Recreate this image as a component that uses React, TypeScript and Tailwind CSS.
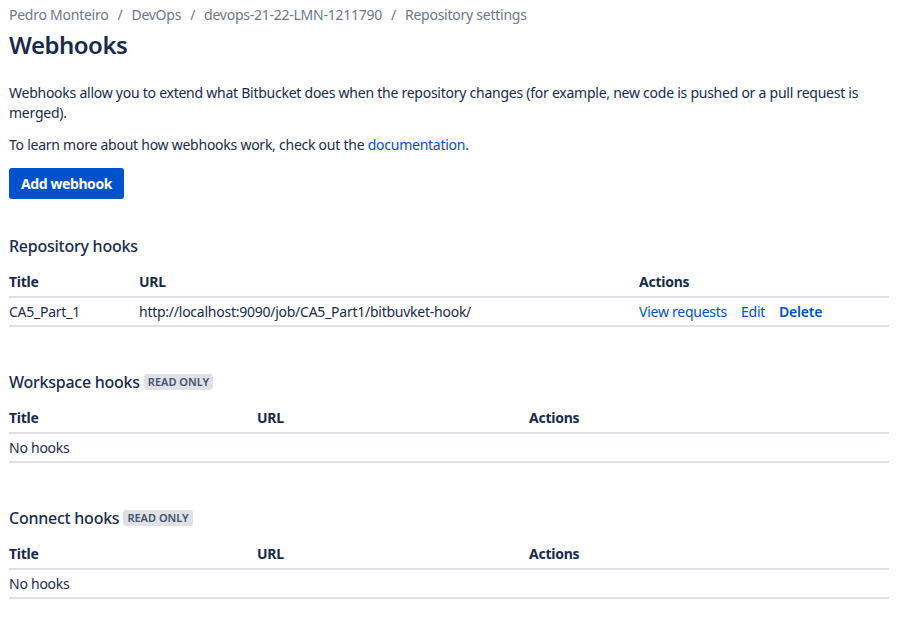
const FONT = "[font-family:'Segoe_UI','Noto_Sans',sans-serif]";

type Col = { label: string; w: string };

function HooksTable({
  cols,
  children,
}: {
  cols: Col[];
  children: React.ReactNode;
}) {
  return (
    <table className="w-[880px] border-collapse text-left text-sm text-[#172b4d]">
      <thead>
        <tr className="border-b-2 border-[#dfe1e6]">
          {cols.map((c) => (
            <th key={c.label} className={`${c.w} h-[30px] p-0 pt-px align-middle font-bold`}>
              {c.label}
            </th>
          ))}
        </tr>
      </thead>
      <tbody>{children}</tbody>
    </table>
  );
}

function ReadOnly() {
  return (
    <span className="ml-1 rounded-[3px] bg-[#dfe1e6] px-1 py-px text-[11px] font-semibold uppercase leading-[14px] tracking-normal text-[#42526e]">
      Read only
    </span>
  );
}

export default function App() {
  return (
    <div
      className={`${FONT} min-h-screen bg-white px-[9px] pt-[5px] text-sm tracking-[-0.25px] text-[#172b4d]`}
    >
      {/* Breadcrumbs */}
      <nav className="flex h-5 items-center gap-[9px] text-[#6b778c]">
        <span>Pedro Monteiro</span>
        <span>/</span>
        <span>DevOps</span>
        <span>/</span>
        <span>devops-21-22-LMN-1211790</span>
        <span>/</span>
        <span>Repository settings</span>
      </nav>
      <h1 className="mt-[5px] text-2xl font-semibold leading-[30px] tracking-[-0.5px]">Webhooks</h1>

      <p className="mt-[23px] w-[860px] leading-5">
        Webhooks allow you to extend what Bitbucket does when the repository changes (for
        example, new code is pushed or a pull request is merged).
      </p>
      <p className="mt-3 leading-5">
        To learn more about how webhooks work, check out the{" "}
        <a className="text-[#0052cc]" href="#">
          documentation
        </a>
        .
      </p>
      <button className="mt-[13px] h-[31px] rounded-[3px] bg-[#0052cc] px-3 font-bold tracking-[-0.4px] text-white">
        Add webhook
      </button>

      {/* Repository hooks */}
      <h2 className="mt-[37px] text-base font-medium leading-5">Repository hooks</h2>
      <div className="mt-[11px]">
        <HooksTable
          cols={[
            { label: "Title", w: "w-[130px]" },
            { label: "URL", w: "w-[500px]" },
            { label: "Actions", w: "" },
          ]}
        >
          <tr className="border-b-2 border-[#dfe1e6]">
            <td className="h-[29px] p-0 align-middle">CA5_Part_1</td>
            <td className="p-0 align-middle">http://localhost:9090/job/CA5_Part1/bitbuvket-hook/</td>
            <td className="p-0 align-middle">
              <span className="flex gap-[14px] text-[#0052cc]">
                <a href="#">View requests</a>
                <a href="#">Edit</a>
                <a href="#" className="font-semibold">
                  Delete
                </a>
              </span>
            </td>
          </tr>
        </HooksTable>
      </div>

      {/* Workspace hooks */}
      <h2 className="mt-[45px] flex items-center text-base font-medium leading-5">
        Workspace hooks <ReadOnly />
      </h2>
      <div className="mt-[11px]">
        <HooksTable
          cols={[
            { label: "Title", w: "w-[248px]" },
            { label: "URL", w: "w-[272px]" },
            { label: "Actions", w: "" },
          ]}
        >
          <tr className="border-b-2 border-[#dfe1e6]">
            <td colSpan={3} className="h-[29px] p-0 align-middle">
              No hooks
            </td>
          </tr>
        </HooksTable>
      </div>

      {/* Connect hooks */}
      <h2 className="mt-[45px] flex items-center text-base font-medium leading-5">
        Connect hooks <ReadOnly />
      </h2>
      <div className="mt-[11px]">
        <HooksTable
          cols={[
            { label: "Title", w: "w-[248px]" },
            { label: "URL", w: "w-[272px]" },
            { label: "Actions", w: "" },
          ]}
        >
          <tr className="border-b-2 border-[#dfe1e6]">
            <td colSpan={3} className="h-[29px] p-0 align-middle">
              No hooks
            </td>
          </tr>
        </HooksTable>
      </div>
    </div>
  );
}
